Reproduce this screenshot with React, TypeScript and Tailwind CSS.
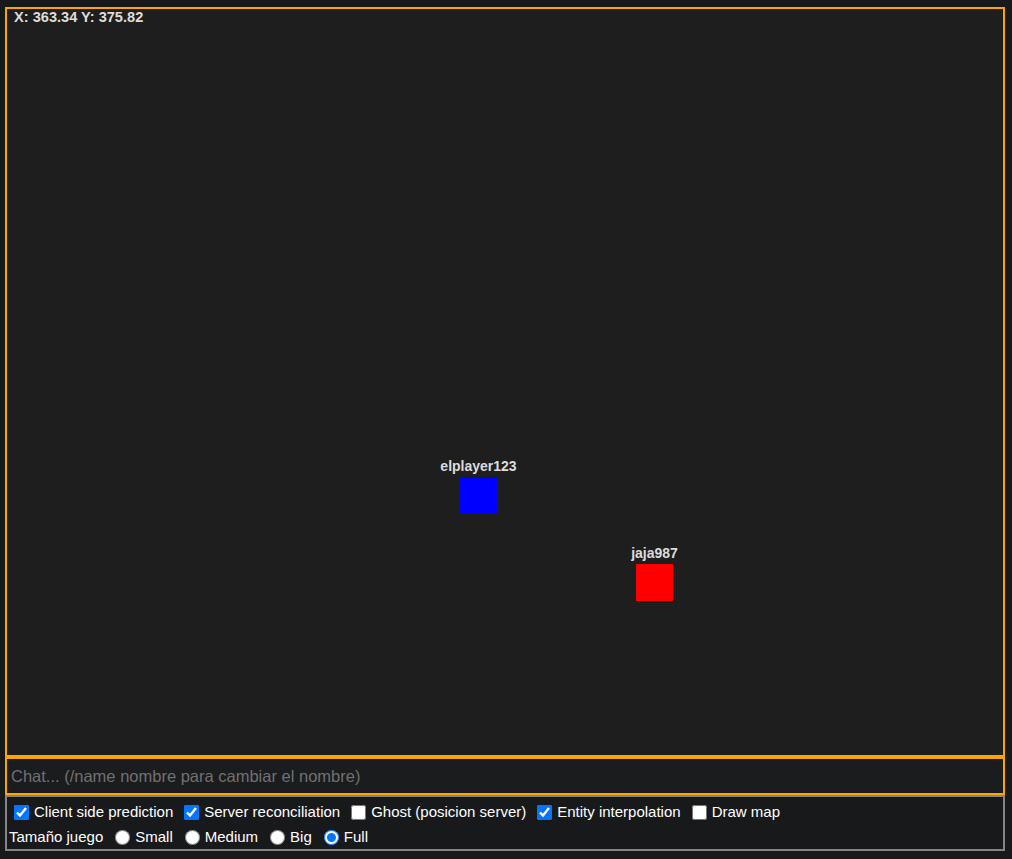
import React from "react";

type Player = { name: string; x: number; y: number; color: string };

const players: Player[] = [
  { name: "elplayer123", x: 453, y: 468, color: "bg-[#0000ff]" },
  { name: "jaja987", x: 629, y: 555, color: "bg-[#ff0000]" },
];

function PlayerBox({ p }: { p: Player }) {
  return (
    <>
      <div
        className={`absolute h-[37px] w-[37px] ${p.color}`}
        style={{ left: p.x, top: p.y }}
      />
      <span
        className="absolute -translate-x-1/2 whitespace-nowrap text-[14px] font-bold leading-none text-[#dcdcdc]"
        style={{ left: p.x + 18.5, top: p.y - 18 }}
      >
        {p.name}
      </span>
    </>
  );
}

const checks = [
  { label: "Client side prediction", on: true },
  { label: "Server reconciliation", on: true },
  { label: "Ghost (posicion server)", on: false },
  { label: "Entity interpolation", on: true },
  { label: "Draw map", on: false },
];

const sizes = ["Small", "Medium", "Big", "Full"];

export default function App() {
  return (
    <div
      className="min-h-[859px] bg-[#18191b] pl-[5px] pt-[7px]"
      style={{ fontFamily: '"Liberation Sans", Arial, sans-serif' }}
    >
      <div className="relative h-[750px] w-[1000px] border-2 border-[#ffa500] bg-[#1e1e1e]">
        <span className="absolute left-[7px] top-[1px] whitespace-nowrap text-[14.6px] font-bold leading-none text-[#dcdcdc]">
          X: 363.34 Y: 375.82
        </span>
        {players.map((p) => (
          <PlayerBox key={p.name} p={p} />
        ))}
      </div>

      <input
        type="text"
        placeholder="Chat... (/name nombre para cambiar el nombre)"
        className="block h-[38px] w-[1000px] border-2 border-[#ffa500] bg-[#1b1c1e] pl-[4px] text-[16.5px] text-white outline-none placeholder:text-[#717171]"
      />

      <div className="w-[1000px] border-2 border-[#858585] pt-[3px] text-[15px] text-white">
        <div className="flex h-[25px] items-center">
          {checks.map((c, i) => (
            <label key={c.label} className={`flex items-center ${i === 0 ? "ml-[7px]" : "ml-[11px]"}`}>
              <input
                type="checkbox"
                defaultChecked={c.on}
                className="m-0 h-[15px] w-[15px] accent-[#0075ff]"
              />
              <span className="ml-[5px] whitespace-nowrap">{c.label}</span>
            </label>
          ))}
        </div>
        <div className="flex h-[24px] items-center">
          <span className="ml-[2px] whitespace-nowrap">Tamaño juego</span>
          {sizes.map((s) => (
            <label key={s} className="ml-[12px] flex items-center">
              <input
                type="radio"
                name="size"
                defaultChecked={s === "Full"}
                className="m-0 h-[15px] w-[15px] accent-[#0075ff]"
              />
              <span className="ml-[5px]">{s}</span>
            </label>
          ))}
        </div>
      </div>
    </div>
  );
}
